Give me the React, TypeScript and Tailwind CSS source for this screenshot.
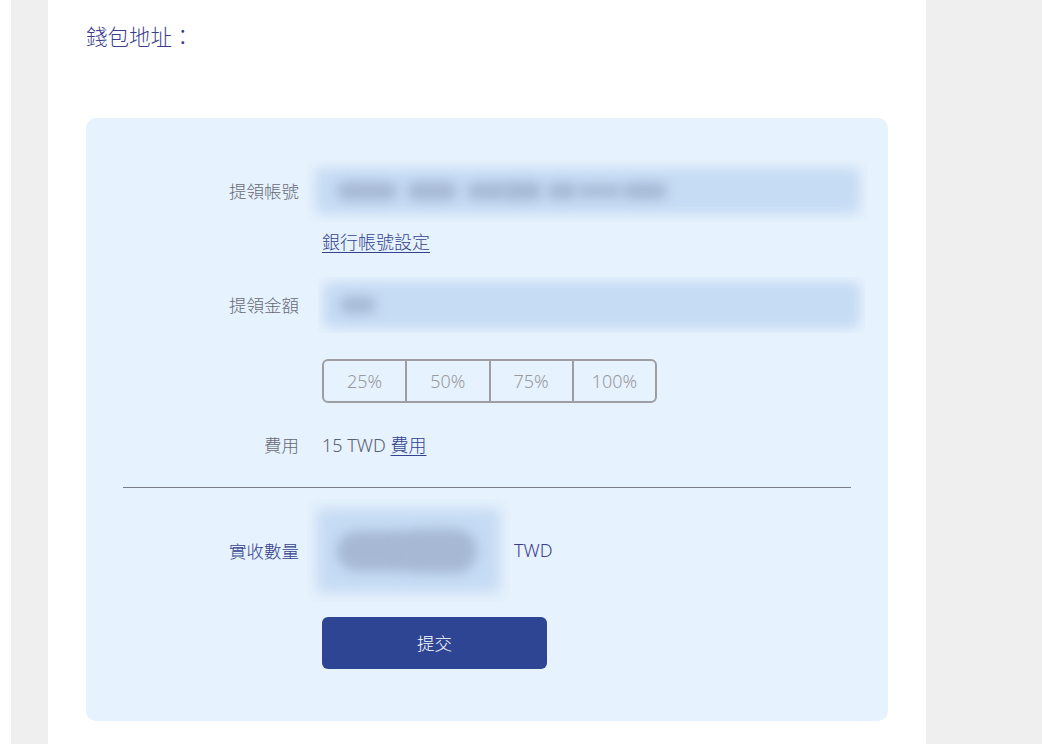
const font = { fontFamily: '"Noto Sans", "Noto Sans CJK TC", sans-serif' };

function BlurField({ width, height, inset, blobs }: { width: number; height: number; inset: number; blobs: { left: number; w: number; h: number }[] }) {
  return (
    <div className="relative overflow-hidden" style={{ width, height }}>
      <div
        className="absolute rounded-lg bg-[#d3e4f8] blur-[6px]"
        style={{ left: inset / 2, right: inset / 2, top: inset / 2, bottom: inset / 2 }}
      />
      <div
        className="absolute rounded-lg bg-[#c6dbf4] blur-[5px]"
        style={{ left: inset, right: inset, top: inset, bottom: inset }}
      />
      {blobs.map((b, i) => (
        <div
          key={i}
          className="absolute rounded-full bg-[#a6b8d4] blur-[6px]"
          style={{ left: b.left, width: b.w, height: b.h, top: (height - b.h) / 2 }}
        />
      ))}
    </div>
  );
}

function Label({ children, dark }: { children: React.ReactNode; dark?: boolean }) {
  return (
    <div className={`w-[213px] shrink-0 text-right text-[17.5px] font-light leading-[26px] ${dark ? "text-[#34428f]" : "text-[#666a75]"}`}>
      {children}
    </div>
  );
}

export default function App() {
  return (
    <div className="flex h-[744px] w-full overflow-hidden bg-white" style={font}>
      <div className="w-[11px] shrink-0 bg-white" />
      <div className="w-[37px] shrink-0 bg-[#efefef]" />
      <div className="w-[878px] shrink-0 bg-white pl-[38px]">
        <h1 className="mt-[21px] text-[21.5px] font-light leading-[32px] text-[#3a3d8c]">錢包地址：</h1>

        <div className="mt-[65px] w-[802px] rounded-[10px] bg-[#e6f2fd] pb-[52px] pt-[42px]">
          <div className="flex items-center">
            <Label>提領帳號</Label>
            <div className="ml-[8px]">
              <BlurField
                width={561}
                height={62}
                inset={12}
                blobs={[
                  { left: 30, w: 60, h: 18 },
                  { left: 100, w: 50, h: 18 },
                  { left: 160, w: 40, h: 16 },
                  { left: 195, w: 40, h: 18 },
                  { left: 240, w: 30, h: 16 },
                  { left: 270, w: 45, h: 12 },
                  { left: 315, w: 45, h: 16 },
                ]}
              />
            </div>
          </div>
          <div className="flex">
            <div className="w-[213px] shrink-0" />
            <a href="#" className="ml-[23px] mt-[7px] text-[18px] font-light leading-[26px] text-[#34428f] underline underline-offset-[3px]">
              銀行帳號設定
            </a>
          </div>

          <div className="mt-[22px] flex items-center">
            <Label>提領金額</Label>
            <div className="ml-[19px]">
              <BlurField width={547} height={56} inset={8} blobs={[{ left: 22, w: 36, h: 16 }]} />
            </div>
          </div>

          <div className="mt-[26px] flex">
            <div className="w-[213px] shrink-0" />
            <div className="ml-[23px] flex h-[44px] w-[335px] overflow-hidden rounded-[6px] border-2 border-[#9e9ea2]">
              {["25%", "50%", "75%", "100%"].map((p, i) => (
                <button
                  key={p}
                  className={`flex flex-1 items-center justify-center text-[18px] font-light text-[#9a9a9e] ${i > 0 ? "border-l-2 border-[#9e9ea2]" : ""}`}
                >
                  {p}
                </button>
              ))}
            </div>
          </div>

          <div className="mt-[29px] flex items-center">
            <Label>費用</Label>
            <div className="ml-[23px] text-[18px] font-light leading-[26px] text-[#5a5f70]">
              15 TWD{" "}
              <a href="#" className="text-[#34428f] underline underline-offset-[3px]">
                費用
              </a>
            </div>
          </div>

          <div className="mx-[37px] mt-[29px] h-px bg-[#7a7d85]" />

          <div className="mt-[11px] flex items-center">
            <Label dark>實收數量</Label>
            <div className="ml-[8px]">
              <BlurField
                width={203}
                height={103}
                inset={14}
                blobs={[
                  { left: 30, w: 80, h: 40 },
                  { left: 90, w: 80, h: 44 },
                ]}
              />
            </div>
            <div className="ml-[4px] text-[18px] font-light text-[#3a3d8c]">TWD</div>
          </div>

          <div className="mt-[15px] flex">
            <div className="w-[213px] shrink-0" />
            <button className="ml-[23px] h-[52px] w-[225px] rounded-[6px] bg-[#2e4593] text-[17.5px] font-light text-white">
              提交
            </button>
          </div>
        </div>
      </div>
      <div className="flex-1 bg-[#efefef]" />
    </div>
  );
}
